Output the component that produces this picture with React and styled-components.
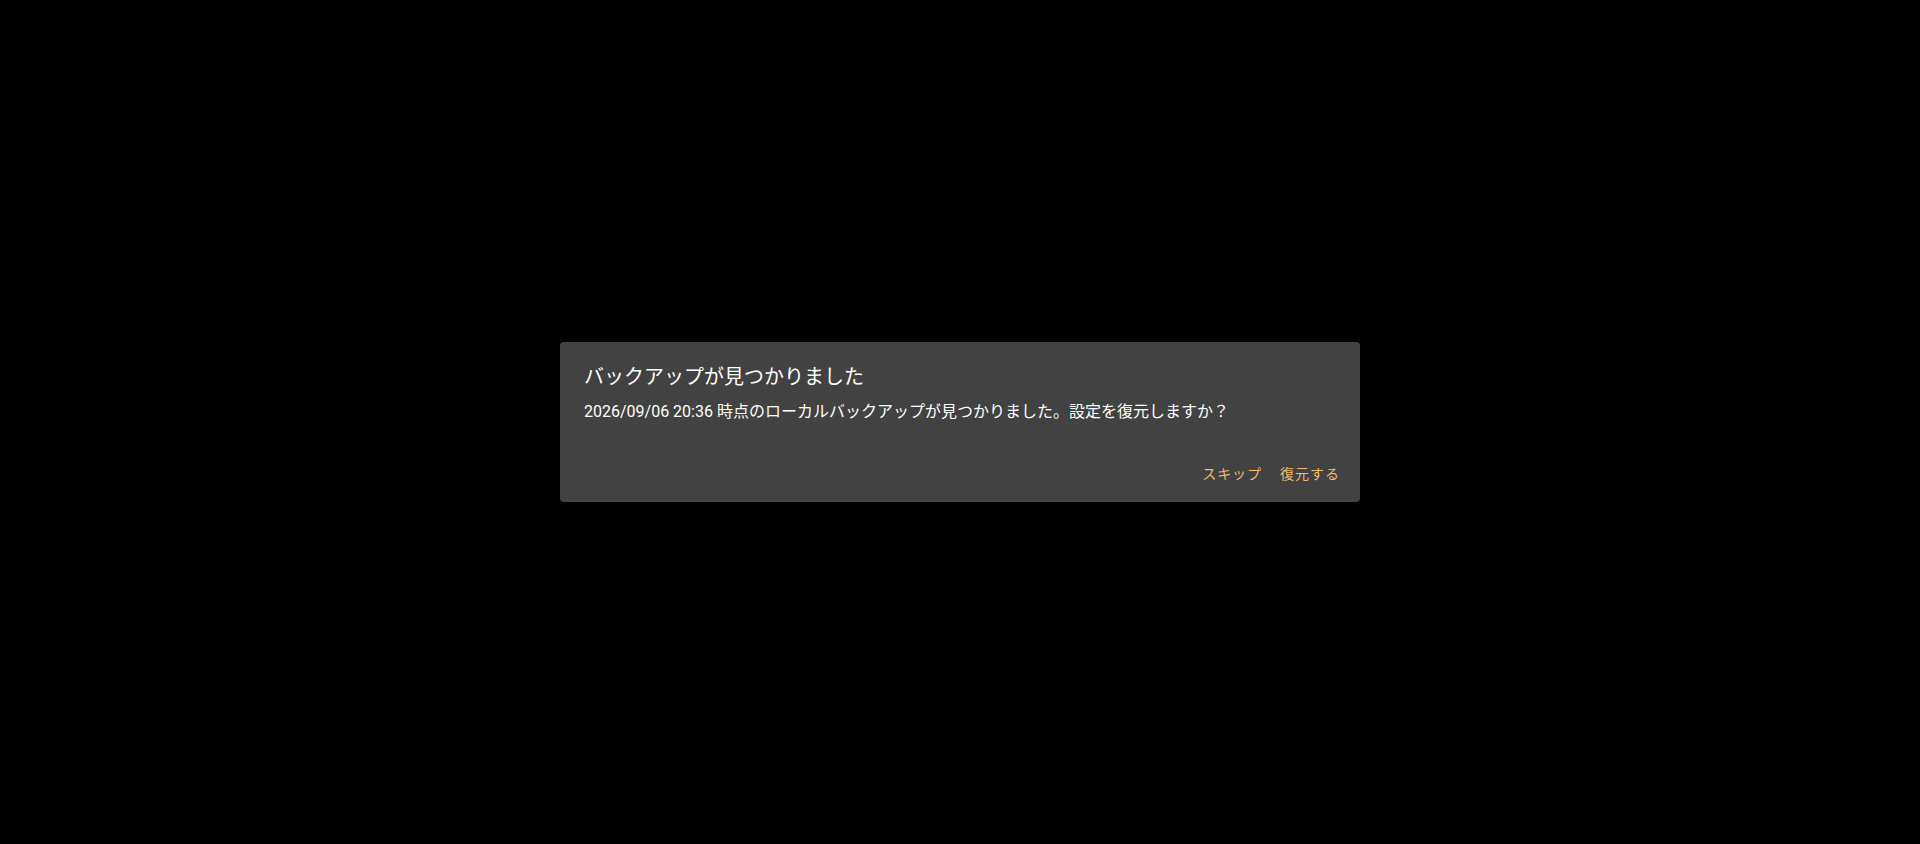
import React from 'react';
import styled, { createGlobalStyle } from 'styled-components';

const GlobalStyle = createGlobalStyle`
  html, body {
    margin: 0;
    padding: 0;
    height: 100%;
    background: #000;
  }
  body {
    font-family: Roboto, "Noto Sans CJK JP", sans-serif;
  }
  #root {
    height: 100%;
  }
`;

const Backdrop = styled.div`
  width: 100%;
  height: 100vh;
  background: #000;
  display: flex;
  align-items: center;
  justify-content: center;
`;

const Dialog = styled.div`
  width: 800px;
  background-color: #424242;
  border-radius: 4px;
  color: #fff;
  display: flex;
  flex-direction: column;
`;

const Title = styled.h2`
  margin: 0;
  padding: 19px 24px 0;
  font-size: 20px;
  font-weight: 400;
  line-height: 32px;
`;

const Content = styled.div`
  padding: 7px 24px 0;
  font-size: 16px;
  line-height: 24px;
`;

const Actions = styled.div`
  display: flex;
  justify-content: flex-end;
  gap: 2px;
  padding: 32px 12px 10px;
`;

const TextButton = styled.button`
  background: transparent;
  border: none;
  border-radius: 4px;
  padding: 6px 8px;
  min-width: 64px;
  font-family: Roboto, "Noto Sans CJK JP", sans-serif;
  font-size: 14px;
  font-weight: 400;
  line-height: 24px;
  letter-spacing: 0.07em;
  color: ${(p) => p.$color || '#ebbf6e'};
  cursor: pointer;
`;

const App = () => (
  <>
    <GlobalStyle />
    <Backdrop>
      <Dialog role="dialog">
        <Title>バックアップが見つかりました</Title>
        <Content>
          2026/09/06 20:36 時点のローカルバックアップが見つかりました。設定を復元しますか？
        </Content>
        <Actions>
          <TextButton>スキップ</TextButton>
          <TextButton>復元する</TextButton>
        </Actions>
      </Dialog>
    </Backdrop>
  </>
);

export default App;
